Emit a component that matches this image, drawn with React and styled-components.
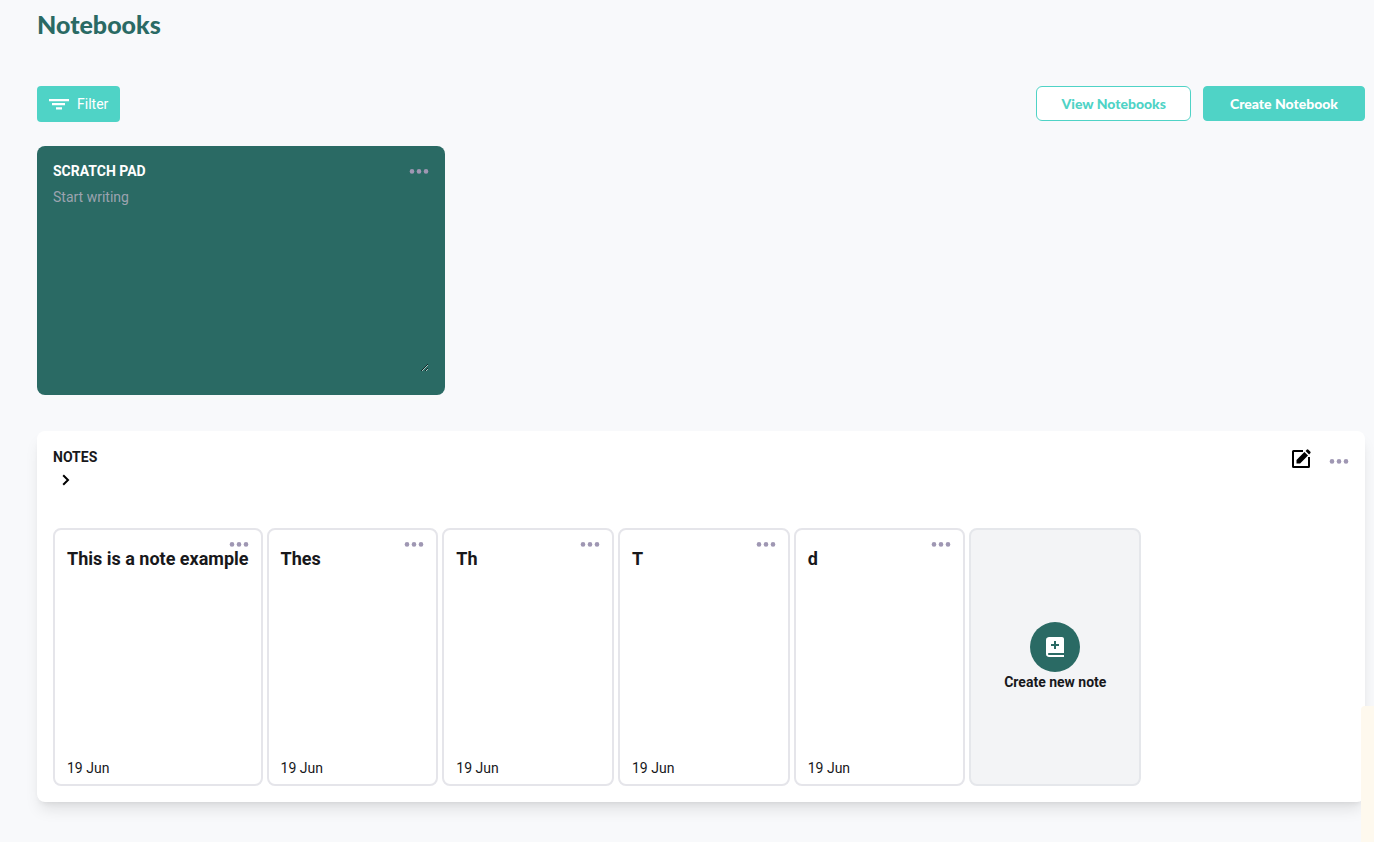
import React, { useState } from 'react'
import styled, { createGlobalStyle } from 'styled-components'
import { BiSolidBookAdd } from 'react-icons/bi'

const notes = [
  { id: 1, title: 'This is a note example', date: '19 Jun' },
  { id: 2, title: 'Thes', date: '19 Jun' },
  { id: 3, title: 'Th', date: '19 Jun' },
  { id: 4, title: 'T', date: '19 Jun' },
  { id: 5, title: 'd', date: '19 Jun' },
]

const Dots = () => (
  <svg width='20' height='6' viewBox='0 0 20 6' fill='#9f97b3'>
    <circle cx='3' cy='3.4' r='2.3' />
    <circle cx='10' cy='3.4' r='2.3' />
    <circle cx='17' cy='3.4' r='2.3' />
  </svg>
)

const App = () => {
  const [text, setText] = useState('')
  return (
    <Page>
      <GlobalStyle />
      <Title>Notebooks</Title>
      <Toolbar>
        <FilterButton type='button'>
          <svg width='20' height='12' viewBox='0 0 20 12' fill='#fff'>
            <path d='M0 1h20v2.2H0zM3 5h13v2.3H3zM7 9.2h6v2.3H7z' />
          </svg>
          Filter
        </FilterButton>
        <Actions>
          <ActionButton type='button' $outlined>
            View Notebooks
          </ActionButton>
          <ActionButton type='button'>Create Notebook</ActionButton>
        </Actions>
      </Toolbar>

      <ScratchPad>
        <PadHeader>
          <PadLabel htmlFor='scratch'>SCRATCH PAD</PadLabel>
          <IconButton type='button' aria-label='Scratch pad options'>
            <Dots />
          </IconButton>
        </PadHeader>
        <PadText
          id='scratch'
          placeholder='Start writing'
          value={text}
          onChange={(e) => setText(e.target.value)}
        />
      </ScratchPad>

      <NotesPanel>
        <NotesHeader>
          <div>
            <NotesTitle>NOTES</NotesTitle>
            <Chevron type='button' aria-label='Show notes'>
              <svg width='8' height='12' viewBox='0 0 8 12' fill='none'>
                <path d='M1.2 1.2 6 6l-4.8 4.8' stroke='#000' strokeWidth='2' />
              </svg>
            </Chevron>
          </div>
          <NotesActions>
            <IconButton type='button' aria-label='Edit notes'>
              <svg width='20' height='20' viewBox='0 0 20 20' fill='none'>
                <path
                  d='M12 2H2.5a.5.5 0 0 0-.5.5v15a.5.5 0 0 0 .5.5h15a.5.5 0 0 0 .5-.5V8'
                  stroke='#000'
                  strokeWidth='2'
                />
                <path
                  d='M5.5 14.5v-3.6l7.9-7.9 3.6 3.6-7.9 7.9zM14.6 1.9l1.1-1.1a1.2 1.2 0 0 1 1.7 0l1.8 1.8a1.2 1.2 0 0 1 0 1.7l-1.1 1.1z'
                  fill='#000'
                />
              </svg>
            </IconButton>
            <IconButton type='button' aria-label='Notes options'>
              <Dots />
            </IconButton>
          </NotesActions>
        </NotesHeader>
        <NoteList>
          {notes.map((note) => (
            <Note key={note.id}>
              <NoteMenu type='button' aria-label='Note options'>
                <Dots />
              </NoteMenu>
              <NoteTitle>{note.title}</NoteTitle>
              <NoteDate>{note.date}</NoteDate>
            </Note>
          ))}
          <CreateNote type='button'>
            <Circle>
              <BiSolidBookAdd size={24} />
            </Circle>
            Create new note
          </CreateNote>
        </NoteList>
      </NotesPanel>
      <SideTab />
    </Page>
  )
}

export default App

const GlobalStyle = createGlobalStyle`
  * {
    box-sizing: border-box;
    margin: 0;
  }
  body {
    background: #f8f9fb;
    color: #18181b;
    font-family: Roboto, sans-serif;
    font-size: 14px;
    line-height: 20px;
  }
  button {
    font: inherit;
    color: inherit;
    border: none;
    padding: 0;
    background: none;
    cursor: pointer;
  }
  svg {
    display: block;
  }
`
const Page = styled.main`
  padding: 8px 9px 40px 37px;
`
const Title = styled.h1`
  color: #2a6a64;
  font-family: Lato, sans-serif;
  font-size: 25px;
  font-weight: 900;
  line-height: 32px;
`
const Toolbar = styled.div`
  display: flex;
  justify-content: space-between;
  align-items: flex-start;
  margin-top: 46px;
`
const FilterButton = styled.button`
  display: flex;
  align-items: center;
  gap: 8px;
  height: 36px;
  padding: 0 12px;
  border-radius: 4px;
  background: #4fd3c6;
  color: #fff;
`
const Actions = styled.div`
  display: flex;
  gap: 12px;
`
const ActionButton = styled.button`
  height: 35px;
  padding: 0 ${(props) => (props.$outlined ? '24px' : '26px')};
  border: 1px solid #4fd3c6;
  border-radius: ${(props) => (props.$outlined ? '6px' : '4px')};
  background: ${(props) => (props.$outlined ? '#fff' : '#4fd3c6')};
  color: ${(props) => (props.$outlined ? '#4fd3c6' : '#fff')};
  font-family: Lato, sans-serif;
  font-weight: 900;
`
const IconButton = styled.button`
  display: flex;
  align-items: center;
  min-height: 20px;
`
const ScratchPad = styled.section`
  width: 408px;
  max-width: 100%;
  margin-top: 24px;
  padding: 15px 16px 23px;
  border-radius: 8px;
  background: #2a6a64;
`
const PadHeader = styled.div`
  display: flex;
  justify-content: space-between;
  align-items: center;
`
const PadLabel = styled.label`
  color: #fff;
  font-weight: 700;
`
const PadText = styled.textarea`
  display: block;
  width: 100%;
  height: 185px;
  margin-top: 6px;
  padding: 0;
  border: none;
  outline: none;
  background: transparent;
  color: #fff;
  font: inherit;
  resize: both;
  &::placeholder {
    color: #9ca3af;
  }
`
const NotesPanel = styled.section`
  margin-top: 36px;
  padding: 16px;
  border-radius: 8px;
  background: #fff;
  box-shadow: 0 10px 15px -3px rgba(0, 0, 0, 0.1),
    0 4px 6px -4px rgba(0, 0, 0, 0.1);
`
const NotesHeader = styled.div`
  display: flex;
  justify-content: space-between;
  align-items: flex-start;
`
const NotesTitle = styled.h2`
  font-size: 14px;
  font-weight: 700;
  line-height: 20px;
`
const Chevron = styled.button`
  display: flex;
  align-items: center;
  height: 26px;
  padding: 0 9px;
`
const NotesActions = styled.div`
  display: flex;
  align-items: flex-start;
  gap: 18px;
  padding-top: 2px;
  ${IconButton}:last-child {
    min-height: 24px;
  }
`
const NoteList = styled.div`
  display: flex;
  gap: 4px;
  margin-top: 35px;
`
const Note = styled.article`
  display: flex;
  flex-direction: column;
  min-width: 13.25%;
  height: 258px;
  padding: 11px 12px 6px;
  border: 2px solid #e5e5ea;
  border-radius: 8px;
`
const NoteMenu = styled.button`
  align-self: flex-end;
`
const NoteTitle = styled.h3`
  font-size: 18px;
  font-weight: 700;
  line-height: 24px;
  white-space: nowrap;
`
const NoteDate = styled.p`
  margin-top: auto;
`
const CreateNote = styled.button`
  && {
    display: flex;
    flex-direction: column;
    align-items: center;
    justify-content: center;
    min-width: 13.25%;
    border: 2px solid #e5e7eb;
    border-radius: 8px;
    background: #f3f4f6;
    font-weight: 700;
  }
`
const Circle = styled.span`
  display: flex;
  align-items: center;
  justify-content: center;
  width: 50px;
  height: 50px;
  border-radius: 50%;
  background: #2a6a64;
  color: #fff;
`
const SideTab = styled.aside`
  position: fixed;
  right: 0;
  bottom: 0;
  width: 13px;
  height: 136px;
  border-radius: 4px 0 0 0;
  background: #fef9ee;
`
